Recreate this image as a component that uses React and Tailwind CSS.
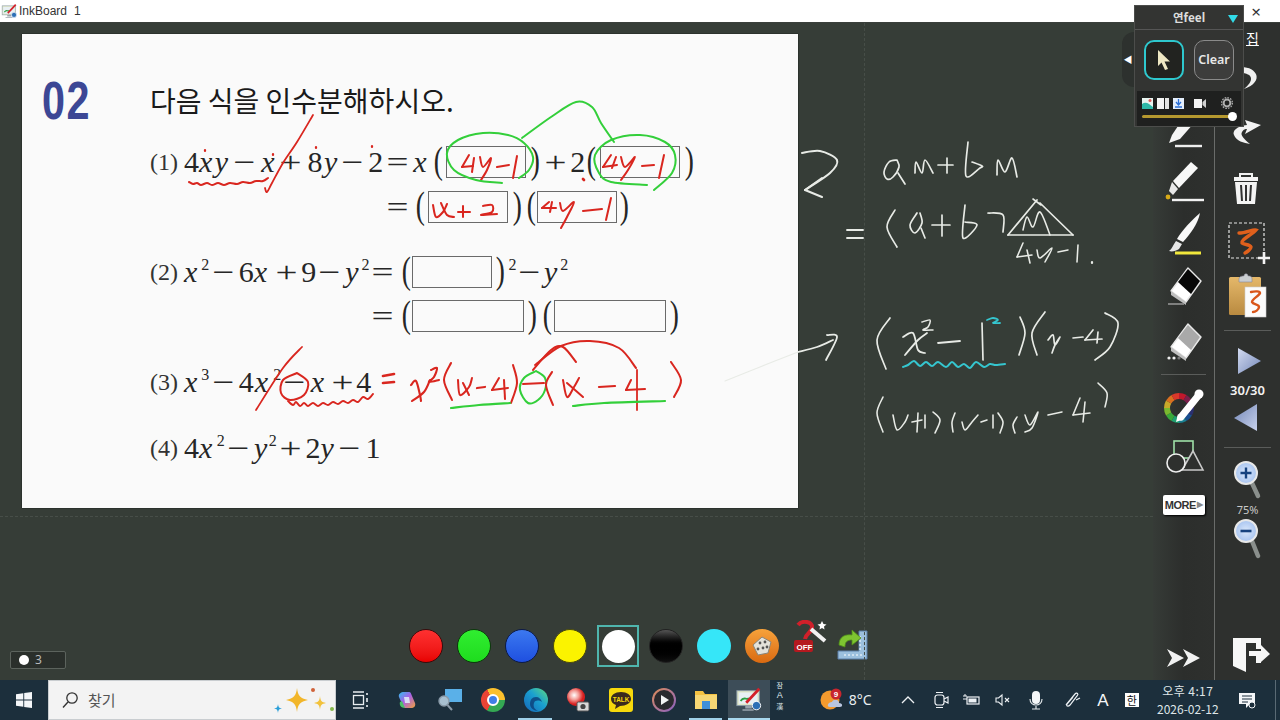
import React from "react";

const R = "#d9261f", G = "#33cf3a", W = "#e8ebe6", C = "#35c6cf";
const sm = (p) => {
  let d = `M${p[0]} ${p[1]}`;
  if (p.length === 4) return d + ` L${p[2]} ${p[3]}`;
  const n = p.length / 2;
  const at = (i) => {
    const k = Math.max(0, Math.min(n - 1, i));
    return [p[k * 2], p[k * 2 + 1]];
  };
  for (let i = 0; i < n - 1; i++) {
    const a = at(i - 1), b = at(i), c = at(i + 1), e = at(i + 2);
    const c1 = [b[0] + (c[0] - a[0]) / 6, b[1] + (c[1] - a[1]) / 6];
    const c2 = [c[0] - (e[0] - b[0]) / 6, c[1] - (e[1] - b[1]) / 6];
    d += ` C${c1[0]} ${c1[1]} ${c2[0]} ${c2[1]} ${c[0]} ${c[1]}`;
  }
  return d;
};
const INK = [
  [R, 1.6, [313,115,297,142,283,163,272,183,267,192,265,188]],
  [R, 2, [205,150,205,151]], [R, 2, [273,154,273,155]], [R, 2, [316,147,316,148]], [R, 2, [372,146,372,147]], [R, 2.4, [583,179,584,180]],
  [R, 1.8, [189,182,193,184,197,183,201,185,207,183,212,185,218,183,224,185,230,183,237,184,243,182,250,183,256,181,263,181,268,178]],
  [R, 1.8, [469,155,462,167]], [R, 1.8, [462,167,473,166]], [R, 1.8, [474,158,472,172]], [R, 1.8, [480,157,483,167,491,158,487,170,481,180]], [R, 1.8, [497,167,509,165]], [R, 1.8, [517,156,513,178]],
  [R, 1.8, [611,155,603,167]], [R, 1.8, [603,167,617,165]], [R, 1.8, [616,157,612,168]], [R, 1.8, [621,157,625,167,635,157,628,170,621,180]], [R, 1.8, [642,166,654,165]], [R, 1.8, [664,155,659,178]],
  [R, 1.8, [433,205,436,217,443,212,447,204]], [R, 1.8, [441,203,447,215,454,217]], [R, 1.8, [458,212,470,212]], [R, 1.8, [463,206,463,217]], [R, 1.8, [483,206,492,205,492,212,481,215,497,214]],
  [R, 1.8, [549,202,542,208]], [R, 1.8, [542,208,556,208]], [R, 1.8, [552,202,550,212]], [R, 1.8, [560,203,563,211,574,202,567,217,561,228]], [R, 1.8, [583,211,602,209]], [R, 1.8, [611,198,606,220]],
  [G, 1.8, [502,183,476,180,454,170,447,153,458,140,483,133,508,135,524,143,533,157,529,170,519,178]],
  [G, 1.8, [522,138,551,117,576,102,592,107,601,123,614,142]],
  [G, 1.8, [654,190,672,173,675,155,665,142,640,135,611,140,595,155,599,173,611,182,647,185]],
  [R, 1.6, [302,347,283,368,256,410]],
  [R, 1.8, [297,373,283,380,281,393,290,400,304,395,308,382,297,373]],
  [R, 1.7, [288,401,293,405,296,402,300,406,304,403,308,406,313,403,318,406,323,403,328,405,333,402,338,404,343,401,348,403,353,400,358,402,363,397,368,399,373,394]],
  [R, 2.4, [383,376,394,374]], [R, 2.4, [383,383,394,382]],
  [R, 1.9, [411,385,416,381,420,395,421,401]], [R, 1.9, [430,380,424,392,412,401]], [R, 1.9, [431,370,437,368,434,377,429,382,439,380]],
  [R, 1.8, [451,363,444,380,452,400]], [R, 1.8, [458,380,460,395,469,387,472,378]], [R, 1.8, [463,383,469,395]], [R, 2, [477,388,485,387]],
  [R, 1.8, [499,378,492,390]], [R, 1.8, [492,390,508,388]], [R, 1.8, [504,380,505,399]], [R, 1.8, [513,365,517,383,511,403]],
  [G, 2, [451,408,479,405,510,403]],
  [G, 1.8, [536,371,524,378,520,390,528,403,538,400,545,390,545,378,536,371]],
  [R, 1.8, [523,384,544,383]],
  [R, 1.8, [533,370,551,350,563,347,576,362]], [R, 1.8, [535,365,561,346,590,341,619,348,636,368]],
  [R, 1.8, [552,372,546,385,553,405]], [R, 1.8, [563,380,567,397,574,387,579,378]], [R, 1.8, [567,383,583,397]], [R, 2, [599,387,615,386]],
  [R, 1.8, [631,380,626,390]], [R, 1.8, [626,390,645,389]], [R, 1.6, [637,370,637,410]], [R, 1.8, [671,362,681,380,674,397]],
  [G, 2, [573,406,604,403,665,401]],
  [W, 1.8, [802,153,820,151,837,160,830,173,805,190]], [W, 1.8, [805,190,822,197]], [W, 1.8, [805,190,822,178]],
  [W, 1.5, [897,160,889,162,884,172,887,179,893,177,899,167,897,160]], [W, 1.5, [898,173,905,184]],
  [W, 1.5, [915,173,916,162,922,173,925,160,933,173]], [W, 1.5, [938,165,953,165]], [W, 1.5, [947,158,947,173]],
  [W, 1.5, [968,142,966,176,980,168,982,166,972,162]], [W, 1.5, [997,175,998,160,1005,172,1012,158,1017,177]],
  [W, 1.7, [847,230,863,230]], [W, 1.7, [847,238,863,238]], [W, 1.5, [895,210,887,227,897,247]],
  [W, 1.5, [917,213,910,225,915,233,922,223,920,213]], [W, 1.5, [921,228,925,238]], [W, 1.5, [932,225,950,225]], [W, 1.5, [942,215,942,236]],
  [W, 1.5, [965,205,963,238,977,225,965,222]], [W, 1.5, [988,213,1003,215,1003,232]],
  [W, 1.5, [1037,200,1008,235]], [W, 1.5, [1008,235,1073,235]], [W, 1.5, [1073,235,1040,203]], [W, 1.4, [1033,199,1041,205]], [W, 1.4, [1023,230,1027,217,1033,227,1040,212,1050,235]],
  [W, 1.4, [1023,243,1017,257]], [W, 1.4, [1017,257,1032,255]], [W, 1.4, [1027,250,1030,263]], [W, 1.4, [1037,250,1040,258,1052,248,1045,262]], [W, 1.4, [1058,252,1068,250]], [W, 1.4, [1078,245,1077,262]], [W, 2, [1092,262,1092,263]],
  [W, 1.6, [798,352,817,347,833,340]], [W, 1.6, [827,335,837,337,826,360]], [W, 1, [725,381,760,367,798,352]],
  [W, 1.5, [890,318,877,340,886,369]], [W, 1.6, [903,337,913,333,918,350,925,353]], [W, 1.6, [927,333,918,340,905,355]], [W, 1.4, [922,322,930,320,928,327,923,330,933,330]],
  [W, 1.6, [938,343,960,341]], [W, 1.5, [982,323,983,360]], [C, 1.6, [987,320,993,318,998,320,993,323,1000,323]],
  [C, 1.8, [903,367,908,365,914,361,920,366,926,362,932,366,938,362,946,367,952,362,958,367,964,364,970,368,976,362,984,367,990,364,996,365,1005,364]],
  [W, 1.5, [1020,317,1025,333,1019,355]], [W, 1.5, [1045,312,1032,333,1037,355]], [W, 1.5, [1048,340,1053,335,1055,345,1060,337,1055,345,1052,353]],
  [W, 1.5, [1073,338,1083,337]], [W, 1.5, [1093,330,1085,340]], [W, 1.5, [1085,340,1102,339]], [W, 1.5, [1098,332,1097,343]], [W, 1.5, [1105,313,1118,323,1110,347,1095,360]],
  [W, 1.4, [883,397,877,413,883,432]], [W, 1.4, [893,415,897,430,905,422,908,415]], [W, 1.4, [912,422,922,420]], [W, 1.4, [918,413,917,432]], [W, 1.4, [925,415,925,428]], [W, 1.4, [933,412,940,420,935,433]],
  [W, 1.4, [955,413,952,422,953,432]], [W, 1.4, [962,422,965,430,972,422,978,415]], [W, 1.4, [981,422,987,420]], [W, 1.4, [993,415,993,428]], [W, 1.4, [998,413,1003,422,1000,433]],
  [W, 1.4, [1017,417,1013,425,1015,433]], [W, 1.4, [1025,415,1030,425,1038,412,1032,428,1025,432]], [W, 1.4, [1048,415,1062,412]],
  [W, 1.4, [1080,398,1073,415]], [W, 1.4, [1073,415,1090,413]], [W, 1.4, [1085,402,1083,422]], [W, 1.4, [1098,383,1107,393,1105,407]],
];

const Op = ({ c = "", children }) => <span className={"w-[23px] text-center scale-x-[1.3] " + c}>{children}</span>;
const I = ({ c = "", children }) => <span className={"italic " + c}>{children}</span>;
const Sup = ({ c = "", children }) => <span className={"text-[16px] -translate-y-[12px] " + c}>{children}</span>;
const P = ({ c = "", children }) => <span className={"w-[12px] text-center text-[38px] scale-x-[.72] translate-y-[1px] " + c}>{children}</span>;
const Box = ({ c = "" }) => <div className={"h-[32px] shrink-0 border-[1.5px] border-[#6a6a6a] translate-y-[6px] " + c} />;
const Row = ({ c = "", label, children }) => (
  <div className={"flex items-baseline pl-[128px] text-[30px] leading-none text-[#262626] font-['Liberation_Serif',serif] whitespace-nowrap " + c}>
    <span className="w-0 h-[40px] shrink-0" />
    <span className="w-[34px] shrink-0 text-[24px] text-[#333] -translate-y-[2px]">{label}</span>
    {children}
  </div>
);

function InkIcon({ size = 30 }) {
  return (
    <svg width={size} height={size} viewBox="0 0 30 30">
      <rect x="2" y="5" width="24" height="16" fill="#dfe6c8" stroke="#8a9aa8" />
      <rect x="4" y="7" width="20" height="12" fill="#e8f0f4" />
      <path d="M6 16c4-6 6 0 9-3" stroke="#2f9e44" strokeWidth="2" fill="none" />
      <path d="M12 18L26 3" stroke="#d4202a" strokeWidth="3" />
      <path d="M11 21h7v3h-7zM8 25h12v1.5H8z" fill="#99a4ad" />
      <circle cx="23" cy="21" r="4.5" fill="#2c6fb5" stroke="#fff" />
    </svg>
  );
}

const Dot = ({ c }) => <div className={"w-[34px] h-[34px] rounded-full shrink-0 " + c} />;

function Eraser({ gray }) {
  return (
    <svg className="w-[44px] h-[44px]" viewBox="0 0 44 44">
      <path d="M26 4L39 17L24 38L9 27Z" fill="#fff" stroke="#e8e8e8" strokeWidth="1.4" strokeLinejoin="round" />
      <path d="M26 5L38 17L29 30L16 18Z" fill={gray ? "#a9a9a9" : "#070707"} />
      <path d="M9 27L24 38L24 41L9 31Z" fill="#bfbfbf" />
      {gray ? (
        <>
          <circle cx="7" cy="38" r="1.6" fill="#eee" /><circle cx="12" cy="38" r="1.6" fill="#eee" /><circle cx="17" cy="38" r="1.6" fill="#777" />
        </>
      ) : (
        <path d="M6 40H22" stroke="#9a9a9a" strokeWidth="1.5" />
      )}
    </svg>
  );
}

function Wheel() {
  const cols = ["#c0182c", "#7a1f4a", "#3a1f60", "#2a2f70", "#1a4f90", "#1a7f90", "#1f9f70", "#39a83a", "#7ab82f", "#c9a82a", "#d97020", "#d9382a"];
  return (
    <svg className="w-[44px] h-[40px]" viewBox="0 0 44 40">
      {cols.map((col, i) => {
        const a = (i * 30 * Math.PI) / 180 - Math.PI / 2, b = ((i + 1) * 30 * Math.PI) / 180 - Math.PI / 2;
        return (
          <path key={i} d={`M${17 + 12 * Math.cos(a)} ${20 + 12 * Math.sin(a)} A12 12 0 0 1 ${17 + 12 * Math.cos(b)} ${20 + 12 * Math.sin(b)}`} fill="none" stroke={col} strokeWidth="6" />
        );
      })}
      <path d="M19 29L36 8" stroke="#fff" strokeWidth="7" strokeLinecap="round" />
      <path d="M14 34L16 26L22 31Z" fill="#fff" />
      <circle cx="37" cy="6" r="4.5" fill="#fff" />
    </svg>
  );
}

function TaskSlot({ c = "", children, bar }) {
  return (
    <div className={"relative h-full flex items-center justify-center shrink-0 " + c}>
      {children}
      {bar}
    </div>
  );
}

export default function App() {
  return (
    <div className="relative w-[1280px] h-[720px] overflow-hidden flex flex-col bg-[#363d37] font-['Noto_Sans','Noto_Sans_CJK_KR',sans-serif]">
      {/* Title bar */}
      <div className="h-[23px] shrink-0 bg-white border-b border-[#3a3f3b] flex items-center pl-[1px] pr-[19px]">
        <InkIcon size={17} />
        <span className="ml-[1px] text-[12px] text-[#333] font-['Liberation_Sans',sans-serif]">InkBoard</span>
        <span className="ml-[7px] text-[12px] text-[#333] font-['Liberation_Sans',sans-serif]">1</span>
        <span className="ml-auto text-[17px] leading-none text-[#333]">×</span>
      </div>

      {/* Main */}
      <div className="flex-1 flex min-h-0">
        <div className="relative flex-1 flex flex-col pl-[22px] pt-[11px]">
          <div className="absolute left-[864px] top-0 bottom-0 border-l border-dashed border-[#474e48]" />
          <div className="absolute left-0 right-0 top-[493px] border-t border-dashed border-[#474e48]" />
          {/* Page */}
          <div className="relative w-[776px] h-[474px] bg-[#fafafa] shadow-[0_0_1px_#000]">
            <div className="h-[98px] pt-[34px] pl-[20px] flex">
              <div className="h-[64px] w-[108px] flex items-center shrink-0">
                <span className="text-[53px] leading-none font-bold tracking-[2px] text-[#3c4795] scale-x-[.78] origin-left font-['Liberation_Sans',sans-serif]">02</span>
              </div>
              <div className="h-[64px] flex items-center text-[28px] text-[#1a1a1a] whitespace-nowrap font-['Noto_Sans_CJK_KR',sans-serif]">다음 식을 인수분해하시오.</div>
            </div>
            <Row c="h-[45px]" label="(1)">
              <span>4</span><I>x</I><I c="ml-[2.5px]">y</I><Op c="ml-[5px]">−</Op><I c="ml-[5px]">x</I><Op c="ml-[5px]">+</Op>
              <span className="ml-[5px]">8</span><I c="ml-[1.5px]">y</I><Op c="ml-[4px]">−</Op><span className="ml-[4px]">2</span><Op c="ml-[2.5px]">=</Op><I c="ml-[4.5px]">x</I>
              <P c="ml-[5px]">(</P><Box c="w-[80px] ml-[2px]" /><P c="ml-[3px]">)</P><Op c="ml-[3px]">+</Op><span className="ml-[3.5px]">2</span><P>(</P><Box c="w-[80px] ml-[2.5px]" /><P c="ml-[3px]">)</P>
            </Row>
            <Row c="h-[65px]" label="">
              <Op c="ml-[201.5px]">=</Op><P c="ml-[5px]">(</P><Box c="w-[80px] ml-[2px]" /><P c="ml-[3px]">)</P><P c="ml-[2px]">(</P><Box c="w-[80px]" /><P c="ml-[1px]">)</P>
            </Row>
            <Row c="h-[44px]" label="(2)">
              <I>x</I><Sup c="ml-[4px]">2</Sup><Op c="ml-[3px]">−</Op><span className="ml-[3.5px]">6</span><I>x</I><Op c="ml-[8px]">+</Op><span className="ml-[3px]">9</span><Op c="ml-[1.5px]">−</Op><I c="ml-[4.5px]">y</I><Sup c="ml-[3px]">2</Sup><Op c="ml-[1.5px]">=</Op>
              <P c="ml-[6px]">(</P><Box c="w-[80px] ml-[.5px]" /><P c="ml-[2px]">)</P><Sup c="ml-[2px]">2</Sup><Op c="ml-[1.5px]">−</Op><I c="ml-[3px]">y</I><Sup c="ml-[3px]">2</Sup>
            </Row>
            <Row c="h-[66px]" label="">
              <Op c="ml-[186.5px]">=</Op><P c="ml-[6px]">(</P><Box c="w-[112px] ml-[.5px]" /><P c="ml-[2px]">)</P><P c="ml-[3px]">(</P><Box c="w-[112px] ml-[.5px]" /><P c="ml-[2px]">)</P>
            </Row>
            <Row c="h-[66px]" label="(3)">
              <I>x</I><Sup c="ml-[4px]">3</Sup><Op c="ml-[3px]">−</Op><span className="ml-[3.5px]">4</span><I c="ml-[1px]">x</I><Sup c="ml-[5px]">2</Sup><Op c="ml-[1.5px]">−</Op><I c="ml-[5px]">x</I><Op c="ml-[6.7px]">+</Op><span className="ml-[2.5px]">4</span>
            </Row>
            <Row c="h-[46px]" label="(4)">
              <span>4</span><I>x</I><Sup c="ml-[4.5px]">2</Sup><Op c="ml-[1.7px]">−</Op><I c="ml-[4.5px]">y</I><Sup c="ml-[1.5px]">2</Sup><Op c="ml-[1.7px]">+</Op><span className="ml-[4px]">2</span><I>y</I><Op c="ml-[3.7px]">−</Op><span className="ml-[5px]">1</span>
            </Row>
          </div>

          {/* Colour row */}
          <div className="mt-auto -ml-[22px] pb-[13px] pl-[10px] flex items-center h-[55px]">
            <div className="self-end -mb-[2px] w-[56px] h-[18px] shrink-0 border border-[#5c635d] rounded-[2px] bg-[#2a2f2b] flex items-center pl-[8px] gap-[6px]">
              <span className="w-[10px] h-[10px] rounded-full bg-white" />
              <span className="text-[12px] leading-none text-[#bbb]">3</span>
            </div>
            <div className="ml-[343px] flex items-center gap-[14px]">
              <Dot c="border border-[#3a0b0b] bg-linear-to-b from-[#ff3030] to-[#e80000]" />
              <Dot c="border border-[#0b3a0b] bg-linear-to-b from-[#30ee30] to-[#1edc1e]" />
              <Dot c="border border-[#0b1a4a] bg-linear-to-b from-[#3c78f0] to-[#1f4fe0]" />
              <Dot c="border border-[#4a4a0b] bg-[#fbf300]" />
              <div className="w-[42px] h-[42px] -mx-[4px] shrink-0 border-2 border-[#4fb5ad] flex items-center justify-center">
                <div className="w-[33px] h-[33px] rounded-full bg-white" />
              </div>
              <Dot c="bg-linear-to-b from-[#555] via-[#000] to-[#111] border border-[#222]" />
              <Dot c="bg-[#36e6f8]" />
              <div className="w-[34px] h-[34px] rounded-full shrink-0 bg-linear-to-b from-[#f7a23a] to-[#d96a10] flex items-center justify-center">
                <svg width="22" height="22" viewBox="0 0 22 22">
                  <path d="M11 2L20 7L17 18L7 20L2 10Z" fill="#e4e2da" stroke="#8a8478" />
                  <circle cx="9" cy="8" r="1.4" fill="#555" /><circle cx="14" cy="7" r="1.4" fill="#555" /><circle cx="7" cy="14" r="1.4" fill="#555" /><circle cx="12" cy="13" r="1.4" fill="#555" /><circle cx="16" cy="12" r="1.4" fill="#555" />
                </svg>
              </div>
              <svg width="34" height="36" viewBox="0 0 34 36" className="shrink-0 -translate-y-[8px]">
                <path d="M5 5C9 0 20 1 19 8C18 13 13 13 12 19" fill="none" stroke="#d0202a" strokeWidth="4" />
                <rect x="1" y="20" width="19" height="12" rx="2" fill="#b5191f" />
                <text x="3.5" y="29.5" fontSize="8" fontWeight="700" fill="#fff" fontFamily="Liberation Sans">OFF</text>
                <path d="M18 9L32 21" stroke="#f2f2f2" strokeWidth="4" />
                <path d="M29 1l1.5 3 3 .5-2.5 2 .5 3-2.5-1.5-2.5 1.5.5-3-2.5-2 3-.5Z" fill="#fff" />
              </svg>
              <svg width="34" height="36" viewBox="0 0 34 36" className="shrink-0 -ml-[5px]">
                <path d="M23 3H31V31H2V23H23Z" fill="#9cc0de" stroke="#5a7fa8" />
                <path d="M24 8V23M8 27H28" stroke="#fff" strokeWidth="1" strokeDasharray="2 2" />
                <path d="M3 17C3 8 10 6 16 7V2L25 10L16 17V12C11 12 9 14 9 19Z" fill="#7ec431" stroke="#4f8f18" strokeWidth=".8" />
              </svg>
            </div>
          </div>
        </div>

        {/* Toolbars */}
        <div className="w-[127px] shrink-0 flex bg-[#2e302e]">
          <div className="w-[61px] shrink-0 flex flex-col items-center pt-[84px] pb-[12px] bg-linear-to-r from-[#363b37] via-[#2c2e2c] to-[#2e302e]">
            <svg className="w-[44px] h-[44px]" viewBox="0 0 44 44">
              <path d="M7 36L10 28L22 10L32 16L18 32Z" fill="#f5f5f5" />
              <path d="M13 39H40" stroke="#eee" strokeWidth="2.4" />
            </svg>
            <svg className="w-[44px] h-[44px] mt-[9px]" viewBox="0 0 44 44">
              <path d="M29 2L36 8L17 28L11 21Z" fill="#f8f8f8" />
              <path d="M10 22L16 29L11 35L7 31Z" fill="#e8e8e8" />
              <circle cx="6" cy="37" r="2.4" fill="#d8aa18" />
              <path d="M10 40H42" stroke="#f2f2f2" strokeWidth="2.4" />
            </svg>
            <svg className="w-[44px] h-[44px] mt-[8px]" viewBox="0 0 44 44">
              <path d="M38 1C36 12 28 22 21 30L15 27C20 18 30 8 38 1Z" fill="#f8f8f8" />
              <path d="M14 29L20 32L17 37C14 39 10 40 7 39C10 37 11 33 14 29Z" fill="#e6e6e6" />
              <path d="M13 41H39" stroke="#f1e73c" strokeWidth="3" />
            </svg>
            <div className="mt-[8px]"><Eraser /></div>
            <div className="mt-[12px]"><Eraser gray /></div>
            <div className="mt-[10px] w-[45px] h-[1px] shrink-0 bg-[#5a5c5a]" />
            <div className="mt-[13px]"><Wheel /></div>
            <svg className="w-[44px] h-[36px] mt-[10px]" viewBox="0 0 44 36">
              <rect x="12" y="3" width="19" height="17" fill="none" stroke="#9fe0a8" strokeWidth="1.6" />
              <path d="M31 13L20 32H41Z" fill="#2e302e" stroke="#c9c9c9" strokeWidth="1.6" />
              <circle cx="14" cy="25" r="9" fill="#2e302e" stroke="#eee" strokeWidth="1.6" />
            </svg>
            <div className="mt-[21px] w-[42px] h-[20px] shrink-0 bg-white rounded-[2px] flex items-center justify-center gap-[1px] text-[11px] leading-none font-bold text-[#333] tracking-[-.5px] font-['Liberation_Sans',sans-serif] shadow-[1px_1px_2px_#000]">
              MORE<span className="text-[8px] text-[#888]">▶</span>
            </div>
            <svg className="mt-auto w-[36px] h-[20px]" viewBox="0 0 36 20">
              <path d="M1 1L18 10L1 19L6 10Z" fill="#f2f2f2" /><path d="M17 1L34 10L17 19L22 10Z" fill="#f2f2f2" />
            </svg>
          </div>
          <div className="w-[1px] shrink-0 bg-[#6a6c6a]" />
          <div className="flex-1 flex flex-col items-center pb-[7px]">
            <div className="h-[17px] mt-[7px] w-full pl-[31px] text-[14px] leading-[17px] text-white underline shrink-0 font-['Noto_Sans_CJK_KR',sans-serif]">집</div>
            <svg className="w-[44px] h-[32px] mt-[14px] shrink-0" viewBox="0 0 44 32">
              <path d="M14 6C30 5 40 20 18 28C28 20 28 12 14 12Z" fill="#f0f0f0" />
            </svg>
            <svg className="w-[44px] h-[30px] mt-[24px] shrink-0 -translate-x-[2px]" viewBox="0 0 44 30">
              <path d="M37 8L21 3L23 8C13 9 8 14 10 18C12 24 20 26 26 27C20 22 16 18 18 15C20 12 21 12 23 12L21 17Z" fill="#f3f3f3" />
            </svg>
            <svg className="w-[44px] h-[36px] mt-[24px] shrink-0 -translate-x-[2px]" viewBox="0 0 44 36">
              <path d="M16 6V3H28V6" fill="none" stroke="#f0f0f0" strokeWidth="2" />
              <path d="M10 6H34V10H10Z" fill="#f4f4f4" />
              <path d="M11 11H33L31 33H13Z" fill="#f4f4f4" />
              <path d="M17 14L18 30M22 14V30M27 14L26 30" stroke="#333" strokeWidth="2" />
            </svg>
            <svg className="w-[44px] h-[44px] mt-[14px] shrink-0" viewBox="0 0 44 44">
              <rect x="3" y="2" width="35" height="35" fill="none" stroke="#e6e6e6" strokeWidth="1.2" strokeDasharray="3 2" />
              <path d="M13 12C20 12 27 8 30 9C26 14 15 18 16 22C18 24 24 23 25 26C25 28 21 31 19 32" fill="none" stroke="#e0601c" strokeWidth="3.4" strokeLinecap="round" />
              <path d="M38 31V43M32 37H44" stroke="#f4f4f4" strokeWidth="2.6" />
            </svg>
            <svg className="w-[44px] h-[46px] mt-[8px] shrink-0" viewBox="0 0 44 46">
              <defs>
                <linearGradient id="cb" x1="0" y1="0" x2="0" y2="1"><stop offset="0" stopColor="#e5b86a" /><stop offset="1" stopColor="#b98a40" /></linearGradient>
              </defs>
              <rect x="3" y="4" width="32" height="38" rx="1.5" fill="url(#cb)" />
              <path d="M13 6C13 3 17 3 18 3C18 0 22 0 22 3C24 3 26 3 26 6V9H13Z" fill="#c9cdd0" stroke="#889" strokeWidth=".6" />
              <rect x="19" y="14" width="21" height="30" fill="#fbfbfb" stroke="#ccc" strokeWidth=".6" />
              <path d="M25 19C29 18 34 18 34 20C33 23 26 26 26 29C27 32 33 31 33 34C33 37 29 39 27 39" fill="none" stroke="#d9561a" strokeWidth="2.4" strokeLinecap="round" />
            </svg>
            <div className="mt-[11px] w-[47px] h-[1px] shrink-0 bg-[#5a5c5a]" />
            <svg className="w-[44px] h-[26px] mt-[17px] shrink-0" viewBox="0 0 44 26">
              <defs>
                <linearGradient id="t1" x1="0" y1="0" x2="1" y2="1"><stop offset="0" stopColor="#d4dcf2" /><stop offset="1" stopColor="#7387b8" /></linearGradient>
              </defs>
              <path d="M12 0L35 13L12 26Z" fill="url(#t1)" />
            </svg>
            <div className="mt-[7px] h-[18px] shrink-0 text-[13px] leading-[18px] font-semibold text-[#f2f2f2]">30/30</div>
            <svg className="w-[44px] h-[27px] mt-[5px] shrink-0" viewBox="0 0 44 27">
              <defs>
                <linearGradient id="t2" x1="0" y1="0" x2="1" y2="1"><stop offset="0" stopColor="#7387b8" /><stop offset="1" stopColor="#c8d2ec" /></linearGradient>
              </defs>
              <path d="M8 14L31 0V27Z" fill="url(#t2)" />
            </svg>
            <div className="mt-[16px] w-[47px] h-[1px] shrink-0 bg-[#5a5c5a]" />
            <svg className="w-[44px] h-[40px] mt-[11px] shrink-0" viewBox="0 0 44 40">
              <defs>
                <radialGradient id="ln"><stop offset="0" stopColor="#dbe8fb" /><stop offset="1" stopColor="#a8c4f0" /></radialGradient>
              </defs>
              <path d="M26 24L32 37" stroke="#8a8f8c" strokeWidth="4.5" strokeLinecap="round" />
              <circle cx="20" cy="14" r="11" fill="url(#ln)" stroke="#e8e8e8" strokeWidth="2" />
              <path d="M14.5 14H25.5M20 8.5V19.5" stroke="#16427f" strokeWidth="2.4" />
            </svg>
            <div className="mt-[4px] h-[14px] shrink-0 text-[11px] leading-[14px] text-[#c9c9c9]">75%</div>
            <svg className="w-[44px] h-[40px] mt-[2px] shrink-0" viewBox="0 0 44 40">
              <path d="M26 22L32 37" stroke="#8a8f8c" strokeWidth="4.5" strokeLinecap="round" />
              <circle cx="20" cy="12" r="11" fill="url(#ln)" stroke="#e8e8e8" strokeWidth="2" />
              <path d="M14.5 12H25.5" stroke="#16427f" strokeWidth="2.6" />
            </svg>
            <svg className="w-[44px] h-[38px] mt-auto shrink-0" viewBox="0 0 44 38">
              <path d="M7 3H35V14H30V8H20V37L7 31Z" fill="#f7f7f7" />
              <path d="M24 28H35V21H30V28" fill="#f7f7f7" />
              <path d="M23 16H35V10L44 19L35 27V21H23Z" fill="#f7f7f7" />
            </svg>
          </div>
        </div>
      </div>

      {/* Taskbar */}
      <div className="h-[40px] shrink-0 bg-[#1c2f3c] flex items-center text-[#eef2f5]">
        <svg className="w-[16px] h-[16px] ml-[16px] shrink-0" viewBox="0 0 16 16">
          <path d="M0 2.2L7.3 1.2V7.6H0ZM8.2 1L16 0V7.6H8.2ZM0 8.4H7.3V14.8L0 13.8ZM8.2 8.4H16V16L8.2 15Z" fill="#f4f6f8" />
        </svg>
        <div className="w-[288px] h-full ml-[16px] shrink-0 bg-[#f3f3f3] border-y border-l border-r border-[#c9cdd0] flex items-center pl-[12px]">
          <svg width="18" height="18" viewBox="0 0 18 18" className="shrink-0">
            <circle cx="11" cy="7" r="5.2" fill="none" stroke="#333" strokeWidth="1.3" />
            <path d="M7 11L2 16.5" stroke="#333" strokeWidth="1.4" />
          </svg>
          <span className="ml-[9px] text-[15px] text-[#555] font-['Noto_Sans_CJK_KR',sans-serif]">찾기</span>
          <svg width="64" height="38" viewBox="0 0 64 38" className="ml-auto shrink-0">
            <path d="M26 7C27 15 29 17 37 19C29 21 27 23 26 31C25 23 23 21 15 19C23 17 25 15 26 7Z" fill="#f2b62a" />
            <path d="M49 15C49.5 20 50.5 21 55 22C50.5 23 49.5 24 49 29C48.5 24 47.5 23 43 22C47.5 21 48.5 20 49 15Z" fill="#f2c23c" />
            <path d="M7 23C7.4 26 8 27 11 27.5C8 28 7.4 29 7 32C6.6 29 6 28 3 27.5C6 27 6.6 26 7 23Z" fill="#2c9fd8" />
            <circle cx="42" cy="9" r="2" fill="#d0623a" /><circle cx="61" cy="28" r="2" fill="#85b84a" />
          </svg>
        </div>
        <TaskSlot c="w-[48px]">
          <svg width="18" height="18" viewBox="0 0 18 18">
            <path d="M2 1H13M2 17H13" stroke="#e8edf0" strokeWidth="1.3" />
            <rect x="2.5" y="4.5" width="10" height="9" fill="none" stroke="#e8edf0" strokeWidth="1.3" />
            <path d="M16 2V4M16 7V11M16 14V16" stroke="#e8edf0" strokeWidth="1.6" />
          </svg>
        </TaskSlot>
        <TaskSlot c="w-[45px]">
          <svg width="20" height="20" viewBox="0 0 20 20">
            <defs>
              <linearGradient id="cp" x1="0" y1="0" x2="1" y2="1"><stop offset="0" stopColor="#2fc0f0" /><stop offset=".45" stopColor="#a860e8" /><stop offset="1" stopColor="#f0a03a" /></linearGradient>
            </defs>
            <path d="M7 2H12C14 2 14 4 15 6L18 13C19 16 17 18 14 18H9C6 18 6 16 5 14L2 7C1 4 4 2 7 2Z" fill="url(#cp)" />
            <path d="M3 12C2 15 4 18 8 18L5 11Z" fill="#4cc06a" />
            <path d="M7 7H12L13 13H8Z" fill="#dfe8f8" opacity=".9" />
          </svg>
        </TaskSlot>
        <TaskSlot c="w-[42.7px]">
          <svg width="26" height="24" viewBox="0 0 26 24">
            <rect x="8" y="1" width="17" height="13" fill="#5ab0e8" />
            <circle cx="7" cy="13" r="5" fill="#a8c0d0" stroke="#8a9aa8" strokeWidth="1.4" />
            <path d="M10.5 17L15 22" stroke="#8a9aa8" strokeWidth="2" />
          </svg>
        </TaskSlot>
        <TaskSlot c="w-[42.7px]">
          <div className="w-[24px] h-[24px] rounded-full flex items-center justify-center bg-[conic-gradient(from_-30deg,#fbc02d_0_120deg,#34a853_120deg_240deg,#ea4335_240deg_360deg)]">
            <div className="w-[12px] h-[12px] rounded-full bg-[#3f7fe8] border-2 border-white" />
          </div>
        </TaskSlot>
        <TaskSlot c="w-[42.7px]" bar={<div className="absolute bottom-0 left-[4px] w-[34px] h-[2px] bg-[#9fd0e8]" />}>
          <svg width="24" height="24" viewBox="0 0 24 24">
            <defs>
              <linearGradient id="ed" x1="0" y1="1" x2="1" y2="0"><stop offset="0" stopColor="#1565b8" /><stop offset=".55" stopColor="#1aa0d0" /><stop offset="1" stopColor="#5fdc80" /></linearGradient>
            </defs>
            <circle cx="12" cy="12" r="12" fill="url(#ed)" />
            <path d="M12 9C8 9 6 12 6 16C6 20 10 23 14 23C10 21 9 18 10 15C11 12 15 12 18 14C17 11 15 9 12 9Z" fill="#0d3f78" opacity=".8" />
          </svg>
        </TaskSlot>
        <TaskSlot c="w-[42.7px]">
          <svg width="24" height="26" viewBox="0 0 24 26">
            <defs>
              <radialGradient id="bl" cx=".4" cy=".4"><stop offset="0" stopColor="#fff" /><stop offset=".5" stopColor="#f4a09a" /><stop offset="1" stopColor="#d81f1f" /></radialGradient>
            </defs>
            <circle cx="10" cy="10" r="9" fill="url(#bl)" />
            <rect x="11" y="15" width="12" height="9" rx="1.5" fill="#d8d8d8" stroke="#555" />
            <circle cx="17" cy="19.5" r="2.6" fill="#444" />
          </svg>
        </TaskSlot>
        <TaskSlot c="w-[42.7px]">
          <svg width="24" height="24" viewBox="0 0 24 24">
            <rect width="24" height="24" rx="3" fill="#f6d90c" />
            <path d="M12 4C6 4 2 7 2 11C2 14 4 16 7 17L6 21L11 18C17 18 22 15 22 11C22 7 18 4 12 4Z" fill="#3a2a1e" />
            <text x="12" y="13.5" textAnchor="middle" fontSize="6.4" fontWeight="700" fill="#f6d90c" fontFamily="Liberation Sans">TALK</text>
          </svg>
        </TaskSlot>
        <TaskSlot c="w-[42.7px]">
          <div className="w-[24px] h-[24px] rounded-full p-[2px] bg-linear-to-br from-[#e08a4a] to-[#8a5cc0]">
            <div className="w-full h-full rounded-full bg-[#2a2a2e] flex items-center justify-center">
              <svg width="12" height="12" viewBox="0 0 12 12"><path d="M3 1L11 6L3 11Z" fill="#f4f4f4" /></svg>
            </div>
          </div>
        </TaskSlot>
        <TaskSlot c="w-[42.7px]" bar={<div className="absolute bottom-0 left-[4px] w-[33px] h-[2px] bg-[#9fd0e8]" />}>
          <svg width="22" height="20" viewBox="0 0 22 20">
            <path d="M0 1H8L10 4H22V19H0Z" fill="#f5c242" />
            <rect x="0" y="5" width="22" height="14" fill="#f7d774" />
            <rect x="7" y="11" width="8" height="8" fill="#3f8fd8" />
          </svg>
        </TaskSlot>
        <TaskSlot c="w-[42px] bg-[#3d4d58]" bar={<div className="absolute bottom-0 left-0 right-0 h-[2px] bg-[#a9d8ee]" />}>
          <InkIcon size={28} />
        </TaskSlot>
        <div className="w-[20px] -translate-y-[5px] shrink-0 flex flex-col items-center text-[#dfe5e8]">
          <span className="text-[7px] leading-[10px] font-['Noto_Sans_CJK_KR',sans-serif]">잠</span>
          <span className="text-[9px] leading-[11px] font-['Liberation_Sans',sans-serif]">A</span>
          <span className="text-[7px] leading-[10px] font-['Noto_Sans_CJK_KR',sans-serif]">漢</span>
        </div>
        <svg width="24" height="24" viewBox="0 0 24 24" className="ml-[30px] shrink-0">
          <circle cx="10" cy="12" r="9.5" fill="#f39a2e" />
          <path d="M10 19C6 19 8 14 12 14C13 11 19 11 19 15C23 15 23 19 20 19Z" fill="#b9c6e0" />
          <circle cx="16" cy="6" r="5.5" fill="#c8262e" />
          <text x="16" y="9" textAnchor="middle" fontSize="8" fontWeight="700" fill="#fff" fontFamily="Liberation Sans">9</text>
        </svg>
        <span className="ml-[5px] w-[28px] shrink-0 text-[14px] leading-none text-[#e8edf0]">8°C</span>
        <svg width="16" height="12" viewBox="0 0 16 12" className="ml-[23px] shrink-0">
          <path d="M2 9L8 3L14 9" fill="none" stroke="#eef2f5" strokeWidth="1.3" />
        </svg>
        <svg width="16" height="18" viewBox="0 0 16 18" className="ml-[17px] shrink-0">
          <rect x="2" y="4" width="9" height="10" rx="2.5" fill="none" stroke="#eef2f5" strokeWidth="1.2" />
          <path d="M11 8L15 6V12L11 10" fill="none" stroke="#eef2f5" strokeWidth="1.2" />
          <path d="M3 1.5H10M3 16.5H10" stroke="#eef2f5" strokeWidth="1" />
        </svg>
        <svg width="18" height="12" viewBox="0 0 18 12" className="ml-[14px] shrink-0">
          <rect x="4" y="3" width="12" height="7" fill="none" stroke="#eef2f5" strokeWidth="1.2" />
          <rect x="5.5" y="4.5" width="8" height="4" fill="#eef2f5" />
          <path d="M0 2H4M0 5H4M2 0V2" stroke="#eef2f5" strokeWidth="1" />
        </svg>
        <svg width="16" height="14" viewBox="0 0 16 14" className="ml-[14px] shrink-0">
          <path d="M1 5H3.5L7 2V12L3.5 9H1Z" fill="none" stroke="#eef2f5" strokeWidth="1.1" />
          <path d="M10 5L14 9M14 5L10 9" stroke="#eef2f5" strokeWidth="1.1" />
        </svg>
        <svg width="14" height="20" viewBox="0 0 14 20" className="ml-[18px] shrink-0">
          <rect x="3" y="1" width="8" height="13" rx="4" fill="#f4f6f8" />
          <path d="M1 9C1 17 13 17 13 9M7 16V19M3 19H11" fill="none" stroke="#dfe5e8" strokeWidth="1.2" />
        </svg>
        <svg width="18" height="18" viewBox="0 0 18 18" className="ml-[20px] shrink-0">
          <path d="M3 14L12 3C14 1 16 3 14 5L7 14C5 16 3 15 4 13L10 6" fill="none" stroke="#eef2f5" strokeWidth="1.2" />
          <path d="M13 9L17 7" stroke="#eef2f5" strokeWidth="1.2" />
        </svg>
        <span className="ml-[16px] w-[12px] shrink-0 text-center text-[17px] leading-none text-[#f4f6f8] font-['Liberation_Sans',sans-serif]">A</span>
        <span className="ml-[16px] w-[14px] h-[14px] shrink-0 bg-white text-[#111] text-[11px] leading-[14px] text-center font-['Noto_Sans_CJK_KR',sans-serif]">한</span>
        <div className="ml-[9px] w-[80px] shrink-0 flex flex-col items-center text-[12px] leading-[18px] text-[#dfe5e8] font-['Noto_Sans_CJK_KR',sans-serif]">
          <span className="tracking-[.4px]">오후 4:17</span>
          <span>2026-02-12</span>
        </div>
        <svg width="18" height="18" viewBox="0 0 18 18" className="ml-[10px] shrink-0">
          <path d="M1 2H17V13H12L8 17V13H1Z" fill="#f4f6f8" />
          <path d="M4 5H14M4 8H14M4 11H10" stroke="#1c2f3c" strokeWidth="1" />
          <circle cx="14" cy="14" r="3" fill="#1c2f3c" stroke="#f4f6f8" />
        </svg>
        <div className="ml-[19px] w-[1px] h-full bg-[#5a6a74] shrink-0" />
      </div>

      {/* Ink layer */}
      <svg className="absolute inset-0 w-[1280px] h-[720px] pointer-events-none" viewBox="0 0 1280 720">
        {INK.map(([col, w, p], i) => (
          <path key={i} d={sm(p)} fill="none" stroke={col} strokeWidth={w * 1.12} strokeLinecap="round" strokeLinejoin="round" />
        ))}
      </svg>

      {/* Floating panel */}
      <div className="absolute left-[1122px] top-[32px] w-[14px] h-[55px] rounded-l-[12px] bg-[#2d312e] flex items-center justify-center pr-[2px] text-[9px] text-white">◀</div>
      <div className="absolute left-[1134px] top-[5px] w-[110px] h-[122px] bg-[#333432] border border-[#4c4d4b] flex flex-col">
        <div className="h-[24px] shrink-0 border-b border-[#555] flex items-center justify-center relative text-[11.5px] font-bold text-[#ddd] font-['Noto_Sans','Noto_Sans_CJK_KR',sans-serif]">
          연feel
          <svg width="10" height="8" viewBox="0 0 10 8" className="absolute right-[5px] top-[9px]"><path d="M0 0H10L5 8Z" fill="#32dbe8" /></svg>
        </div>
        <div className="flex gap-[10px] pl-[9px] pt-[10px] h-[61px] shrink-0">
          <div className="w-[40px] h-[40px] rounded-[10px] border-2 border-[#2ec8ce] bg-[#222320] flex items-center justify-center">
            <svg width="16" height="22" viewBox="0 0 16 22"><path d="M2 1L14 12.5H8.5L12 20L9 21L5.5 13.5L2 17Z" fill="#efe8c4" /></svg>
          </div>
          <div className="w-[40px] h-[40px] rounded-[10px] border border-[#8a8a8a] bg-[#3d3d3c] flex items-center justify-center text-[12.5px] font-semibold text-[#e8e8e8]">Clear</div>
        </div>
        <div className="mx-[2px] h-[35px] bg-[#1f201f] flex flex-col pl-[5px] pr-[8px] pt-[6px]">
          <div className="flex items-center h-[12px]">
            <svg width="11" height="11" viewBox="0 0 11 11" className="shrink-0">
              <rect width="11" height="11" fill="#e8f4f0" /><path d="M0 11V6C4 3 7 6 11 9V11Z" fill="#2fb8a8" /><circle cx="8" cy="2.5" r="1.5" fill="#e05a5a" />
            </svg>
            <svg width="12" height="11" viewBox="0 0 12 11" className="ml-[4px] shrink-0">
              <rect width="7" height="11" fill="#f4f4f4" /><rect x="8" width="4" height="11" fill="#e4e4e4" />
            </svg>
            <svg width="11" height="11" viewBox="0 0 11 11" className="ml-[4px] shrink-0">
              <rect width="11" height="11" fill="#e4eefc" /><path d="M5.5 1V6M3 4L5.5 7L8 4M2 9H9" fill="none" stroke="#2a6fd8" strokeWidth="1.3" />
            </svg>
            <svg width="12" height="11" viewBox="0 0 12 11" className="ml-[10px] shrink-0">
              <rect y="1" width="8" height="9" fill="#f4f4f4" /><path d="M8.5 4L12 1V10L8.5 7Z" fill="#cfcfcf" />
            </svg>
            <svg width="12" height="12" viewBox="0 0 12 12" className="ml-auto shrink-0">
              <circle cx="6" cy="6" r="3.4" fill="none" stroke="#b0b0b0" strokeWidth="2" />
              <circle cx="6" cy="6" r="5.4" fill="none" stroke="#b0b0b0" strokeWidth="1.2" strokeDasharray="1.6 1.2" />
            </svg>
          </div>
          <div className="relative mt-[6px] h-[3px] bg-[#b5982f] rounded-full">
            <div className="absolute right-[-4px] -top-[3px] w-[9px] h-[9px] rounded-full bg-white" />
          </div>
        </div>
      </div>
    </div>
  );
}
